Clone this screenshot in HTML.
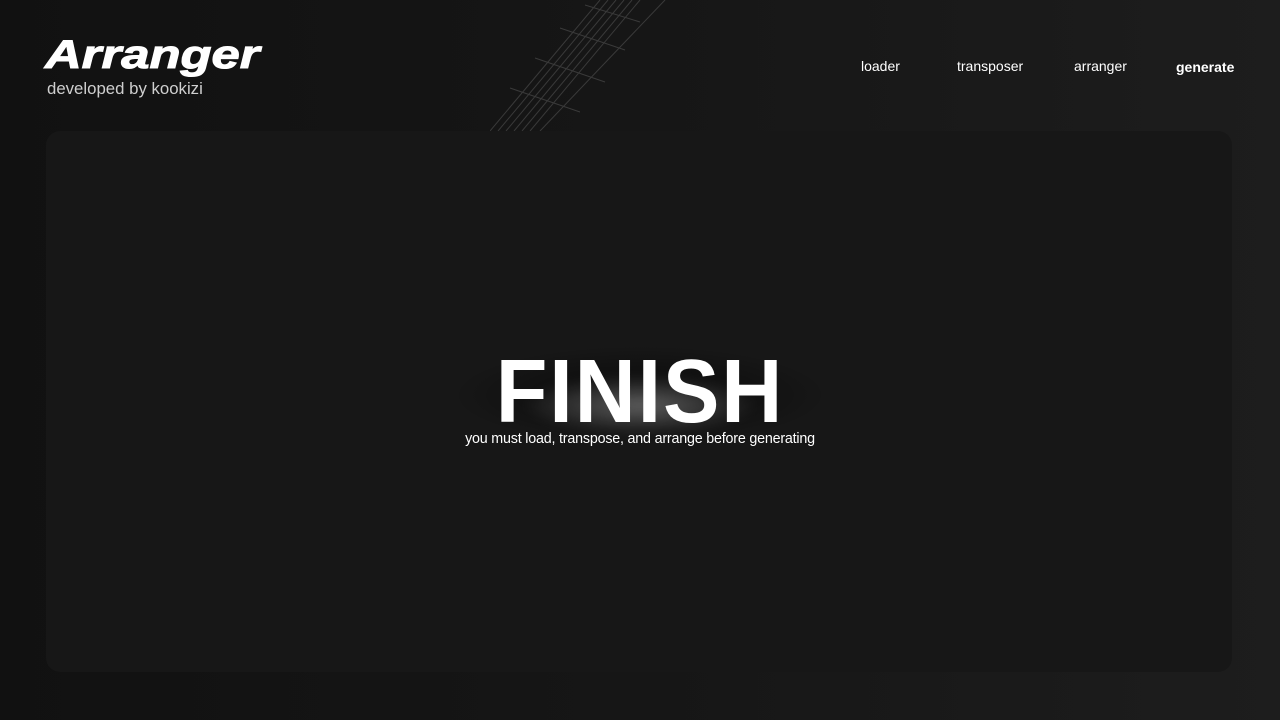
<!DOCTYPE html>
<html><head><style>
html,body{margin:0;padding:0;}
body{width:1280px;height:720px;overflow:hidden;position:relative;font-family:"Liberation Sans",sans-serif;
background:linear-gradient(90deg,#111 0%,#161616 50%,#1d1d1d 100%);}
.logo{position:absolute;left:45px;top:33px;color:#fff;font-size:40px;font-weight:bold;font-style:italic;letter-spacing:0px;transform:scaleX(1.27);transform-origin:left;-webkit-text-stroke:1px #fff;}
.sub{position:absolute;left:47px;top:79px;color:#cfcfcf;font-size:16.8px;}
.nav{position:absolute;top:58px;color:#fff;font-size:14px;}
.card{position:absolute;left:46px;top:131px;width:1186px;height:541px;background:#171717;border-radius:14px;}
.glow{position:absolute;left:520px;top:375px;width:240px;height:60px;border-radius:50%;background:radial-gradient(ellipse,rgba(255,255,255,0.35),rgba(255,255,255,0) 70%);filter:blur(6px);}
.shadow{position:absolute;left:450px;top:345px;width:380px;height:100px;border-radius:50%;background:radial-gradient(ellipse,rgba(0,0,0,0.6),rgba(0,0,0,0) 70%);}
.fin{position:absolute;left:0;width:1280px;top:341px;text-align:center;color:#fff;font-size:90px;font-weight:bold;letter-spacing:2px;transform:scaleX(0.94);}
.msg{position:absolute;left:0;width:1280px;top:431px;text-align:center;color:#fff;font-size:14.3px;letter-spacing:-0.2px;}
.neck{position:absolute;left:490px;top:0;width:180px;height:131px;}
</style></head><body>
<svg class="neck" viewBox="0 0 180 131">
<g stroke="#3a3a3a" stroke-width="1" fill="none">
<line x1="0" y1="131" x2="110" y2="0"/><line x1="8" y1="131" x2="118" y2="0"/><line x1="16" y1="131" x2="126" y2="0"/>
<line x1="24" y1="131" x2="134" y2="0"/><line x1="32" y1="131" x2="142" y2="0"/><line x1="40" y1="131" x2="150" y2="0"/>
<line x1="50" y1="131" x2="175" y2="0"/>
<line x1="20" y1="88" x2="90" y2="112"/><line x1="45" y1="58" x2="115" y2="82"/><line x1="70" y1="28" x2="135" y2="50"/><line x1="95" y1="5" x2="150" y2="22"/>
</g></svg>
<div class="logo">Arranger</div>
<div class="sub">developed by kookizi</div>
<div class="nav" style="left:861px">loader</div>
<div class="nav" style="left:957px">transposer</div>
<div class="nav" style="left:1074px">arranger</div>
<div class="nav" style="left:1176px;top:59px;font-weight:bold">generate</div>
<div class="card"></div>
<div class="shadow"></div>
<div class="glow"></div>
<div class="fin">FINISH</div>
<div class="msg">you must load, transpose, and arrange before generating</div>
</body></html>
